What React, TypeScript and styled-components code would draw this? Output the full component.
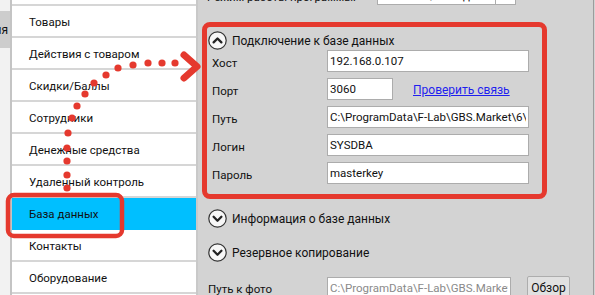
import styled, { createGlobalStyle } from "styled-components";

const GlobalStyle = createGlobalStyle`
  html, body {
    margin: 0;
    padding: 0;
  }
  body {
    font-family: Roboto, "Noto Sans", sans-serif;
    font-size: 12px;
    color: #111;
  }
`;

const RED = "#e5392e";

const Window = styled.div`
  position: relative;
  width: 595px;
  height: 295px;
  overflow: hidden;
  display: flex;
  background: #d3d3d3;
`;

const OuterMenu = styled.div`
  width: 10px;
  flex-shrink: 0;
  background: #f2f2f2;
  border-right: 2px solid #c4c4c4;
  padding-top: 11px;
`;

const OuterTab = styled.div`
  height: 37px;
  background: #cdcdcd;
  display: flex;
  align-items: center;
  justify-content: flex-end;
  overflow: hidden;
  white-space: nowrap;
  padding-right: 2px;
`;

const NavList = styled.ul`
  list-style: none;
  margin: -26px 0 0;
  padding: 0;
  width: 184px;
  flex-shrink: 0;
  background: #fff;
  border-right: 2px solid #c9c9c9;
`;

const NavItem = styled.li<{ $active?: boolean }>`
  height: 32px;
  box-sizing: border-box;
  padding: 2px 0 0 17px;
  display: flex;
  align-items: center;
  white-space: nowrap;
  font-size: 11.5px;
  background: ${(p) => (p.$active ? "#00bfff" : "transparent")};
  border-bottom: 2px solid ${(p) => (p.$active ? "#00bfff" : "#d6d6d6")};
`;

const Panel = styled.div`
  flex: 1;
  display: flex;
  flex-direction: column;
  border-right: 1px solid #9c9c9c;
  margin-right: 1px;
`;

const ModeRow = styled.div`
  display: flex;
  align-items: center;
  height: 22px;
  margin-top: -17px;
  padding-left: 9px;
  font-size: 11.5px;
`;

const ModeLabel = styled.span`
  width: 170px;
  padding-top: 6px;
`;

const Combo = styled.div`
  width: 139px;
  height: 22px;
  box-sizing: border-box;
  background: #fff;
  border: 1px solid #acacac;
  display: flex;
  align-items: center;
`;

const ComboText = styled.span`
  flex: 1;
  padding: 4px 0 0 3px;
`;

const ComboButton = styled.span`
  width: 19px;
  height: 100%;
  border-left: 1px solid #acacac;
`;

const Section = styled.div`
  margin: 17px 0 0 4px;
  width: 345px;
  box-sizing: border-box;
  border: 5px solid ${RED};
  border-radius: 8px;
  padding: 4px 0 10px 1px;
  display: flex;
  flex-direction: column;
`;

const Header = styled.div<{ $gap?: number }>`
  display: flex;
  align-items: center;
  gap: 5px;
  height: 19px;
  font-size: 12px;
  margin-top: ${(p) => p.$gap ?? 0}px;
  margin-left: ${(p) => (p.$gap ? 10 : 0)}px;
`;

const Fields = styled.div`
  display: flex;
  flex-direction: column;
  gap: 6px;
  padding-left: 4px;
`;

const FieldRow = styled.div`
  display: flex;
  align-items: center;
  height: 22px;
`;

const Label = styled.span<{ $w?: number }>`
  width: ${(p) => p.$w ?? 115}px;
  flex-shrink: 0;
  padding-top: 3px;
  font-size: 11.5px;
`;

const TextBox = styled.input<{ $w: number; $muted?: boolean }>`
  width: ${(p) => p.$w}px;
  height: 22px;
  box-sizing: border-box;
  margin: 0;
  padding: 0 2px;
  border: 1px solid #acacac;
  background: #fff;
  font-family: inherit;
  font-size: 11.5px;
  color: ${(p) => (p.$muted ? "#8a8a8a" : "#111")};
  outline: none;
`;

const Link = styled.a`
  margin-left: 20px;
  color: #1f1fef;
  text-decoration: underline;
  font-size: 12px;
  padding-top: 2px;
`;

const PhotoRow = styled.div`
  display: flex;
  align-items: flex-start;
  margin: 15px 0 0 10px;
`;

const PhotoLabel = styled(Label)`
  padding-top: 5px;
`;

const Button = styled.button`
  margin: -1px 0 0 16px;
  width: 43px;
  height: 24px;
  box-sizing: border-box;
  border: 1px solid #adadad;
  border-radius: 2px;
  background: #e1e1e1;
  font-family: inherit;
  font-size: 12px;
  color: #111;
  padding: 0;
`;

const Overlay = styled.svg`
  position: absolute;
  left: 0;
  top: 0;
  width: 595px;
  height: 295px;
  pointer-events: none;
`;

function ToggleIcon({ open }: { open: boolean }) {
  return (
    <svg width="19" height="19" viewBox="0 0 19 19">
      <circle cx="9.5" cy="9.5" r="8.7" fill="#f7f7f7" stroke="#333" strokeWidth="1.2" />
      <path
        d={open ? "M5.6 11.4 L9.5 7.5 L13.4 11.4" : "M5.6 7.8 L9.5 11.7 L13.4 7.8"}
        fill="none"
        stroke="#222"
        strokeWidth="2.3"
        strokeLinecap="round"
        strokeLinejoin="round"
      />
    </svg>
  );
}

const navItems = [
  "Общие",
  "Товары",
  "Действия с товаром",
  "Скидки/Баллы",
  "Сотрудники",
  "Денежные средства",
  "Удаленный контроль",
  "База данных",
  "Контакты",
  "Оборудование",
];

const dots: [number, number][] = [
  [67, 188], [67, 175], [67, 161], [67, 148], [68, 133], [72, 118], [77, 106],
  [85, 94], [94, 83], [106, 75], [118, 68], [133, 65], [148, 63], [162, 63], [175, 63],
];

export default function App() {
  return (
    <Window>
      <GlobalStyle />
      <OuterMenu>
        <OuterTab>Конфигурация</OuterTab>
      </OuterMenu>
      <NavList>
        {navItems.map((item) => (
          <NavItem key={item} $active={item === "База данных"}>
            {item}
          </NavItem>
        ))}
      </NavList>
      <Panel>
        <ModeRow>
          <ModeLabel>Режим работы программы:</ModeLabel>
          <Combo>
            <ComboText>Магазин / склад</ComboText>
            <ComboButton />
          </Combo>
        </ModeRow>
        <Section>
          <Header>
            <ToggleIcon open />
            Подключение к базе данных
          </Header>
          <Fields>
            <FieldRow>
              <Label>Хост</Label>
              <TextBox $w={202} value="192.168.0.107" readOnly />
            </FieldRow>
            <FieldRow>
              <Label>Порт</Label>
              <TextBox $w={66} value="3060" readOnly />
              <Link>Проверить связь</Link>
            </FieldRow>
            <FieldRow>
              <Label>Путь</Label>
              <TextBox $w={202} value="C:\ProgramData\F-Lab\GBS.Market\6\Database\GBS.FDB" readOnly />
            </FieldRow>
            <FieldRow>
              <Label>Логин</Label>
              <TextBox $w={202} value="SYSDBA" readOnly />
            </FieldRow>
            <FieldRow>
              <Label>Пароль</Label>
              <TextBox $w={202} value="masterkey" readOnly />
            </FieldRow>
          </Fields>
        </Section>
        <Header $gap={10}>
          <ToggleIcon open={false} />
          Информация о базе данных
        </Header>
        <Header $gap={15}>
          <ToggleIcon open={false} />
          Резервное копирование
        </Header>
        <PhotoRow>
          <PhotoLabel $w={119}>Путь к фото</PhotoLabel>
          <TextBox $w={184} $muted value="C:\ProgramData\F-Lab\GBS.Market\6\Photo" readOnly />
          <Button>Обзор</Button>
        </PhotoRow>
      </Panel>
      <Overlay viewBox="0 0 595 295">
        <rect x="8" y="195" width="114" height="41" rx="6" fill="none" stroke={RED} strokeWidth="4.5" />
        {dots.map(([x, y]) => (
          <circle key={`${x}-${y}`} cx={x} cy={y} r="3.6" fill={RED} />
        ))}
        <path
          d="M184 55 L197 66.5 L184 78"
          fill="none"
          stroke={RED}
          strokeWidth="7"
          strokeLinecap="round"
          strokeLinejoin="round"
        />
      </Overlay>
    </Window>
  );
}
